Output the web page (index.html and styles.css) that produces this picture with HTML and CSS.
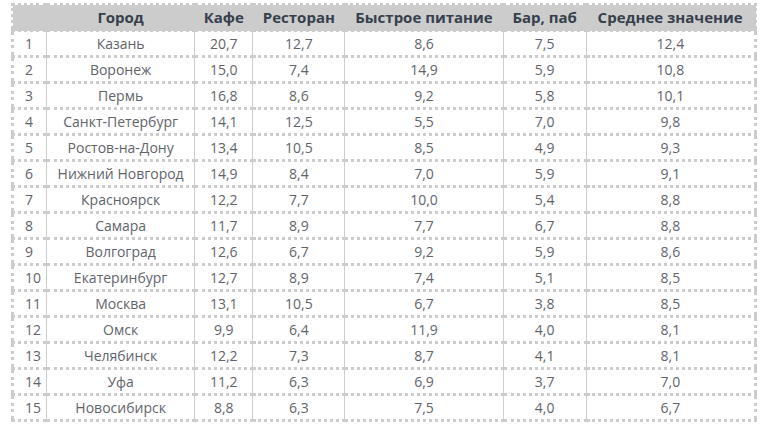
FILE: index.html
```html
<!DOCTYPE html>
<html lang="ru">
<head>
<meta charset="utf-8">
<link rel="stylesheet" href="styles.css">
</head>
<body>
<table class="rating">
  <colgroup>
    <col class="c-num"><col class="c-city"><col class="c-cafe"><col class="c-rest"><col class="c-fast"><col class="c-bar"><col class="c-avg">
  </colgroup>
  <thead>
    <tr><th></th><th>Город</th><th>Кафе</th><th>Ресторан</th><th>Быстрое питание</th><th>Бар, паб</th><th>Среднее значение</th></tr>
  </thead>
  <tbody>
    <tr><td class="num">1</td><td>Казань</td><td>20,7</td><td>12,7</td><td>8,6</td><td>7,5</td><td>12,4</td></tr>
    <tr><td class="num">2</td><td>Воронеж</td><td>15,0</td><td>7,4</td><td>14,9</td><td>5,9</td><td>10,8</td></tr>
    <tr><td class="num">3</td><td>Пермь</td><td>16,8</td><td>8,6</td><td>9,2</td><td>5,8</td><td>10,1</td></tr>
    <tr><td class="num">4</td><td>Санкт-Петербург</td><td>14,1</td><td>12,5</td><td>5,5</td><td>7,0</td><td>9,8</td></tr>
    <tr><td class="num">5</td><td>Ростов-на-Дону</td><td>13,4</td><td>10,5</td><td>8,5</td><td>4,9</td><td>9,3</td></tr>
    <tr><td class="num">6</td><td>Нижний Новгород</td><td>14,9</td><td>8,4</td><td>7,0</td><td>5,9</td><td>9,1</td></tr>
    <tr><td class="num">7</td><td>Красноярск</td><td>12,2</td><td>7,7</td><td>10,0</td><td>5,4</td><td>8,8</td></tr>
    <tr><td class="num">8</td><td>Самара</td><td>11,7</td><td>8,9</td><td>7,7</td><td>6,7</td><td>8,8</td></tr>
    <tr><td class="num">9</td><td>Волгоград</td><td>12,6</td><td>6,7</td><td>9,2</td><td>5,9</td><td>8,6</td></tr>
    <tr><td class="num">10</td><td>Екатеринбург</td><td>12,7</td><td>8,9</td><td>7,4</td><td>5,1</td><td>8,5</td></tr>
    <tr><td class="num">11</td><td>Москва</td><td>13,1</td><td>10,5</td><td>6,7</td><td>3,8</td><td>8,5</td></tr>
    <tr><td class="num">12</td><td>Омск</td><td>9,9</td><td>6,4</td><td>11,9</td><td>4,0</td><td>8,1</td></tr>
    <tr><td class="num">13</td><td>Челябинск</td><td>12,2</td><td>7,3</td><td>8,7</td><td>4,1</td><td>8,1</td></tr>
    <tr><td class="num">14</td><td>Уфа</td><td>11,2</td><td>6,3</td><td>6,9</td><td>3,7</td><td>7,0</td></tr>
    <tr><td class="num">15</td><td>Новосибирск</td><td>8,8</td><td>6,3</td><td>7,5</td><td>4,0</td><td>6,7</td></tr>
  </tbody>
</table>
</body>
</html>
```
FILE: styles.css
```css
html, body {
  margin: 0;
  padding: 0;
  background: #fff;
}
body {
  padding: 3px 0 0 11px;
  font-family: "Open Sans", "Liberation Sans", sans-serif;
}
.rating {
  border-collapse: collapse;
  table-layout: fixed;
  width: 746px;
  border: 3px dotted #cccccc;
}
.c-num { width: 34px; }
.c-city { width: 148px; }
.c-cafe { width: 58px; }
.c-rest { width: 92px; }
.c-fast { width: 158px; }
.c-bar { width: 83px; }
.c-avg { width: 169px; }
.rating th {
  background: #cccccc;
  color: #36404c;
  font-weight: 700;
  height: 23px;
  padding: 0;
  text-align: center;
  font-size: 15px;
  line-height: 21px;
  border: none;
  border-bottom: 3px dotted #cccccc;
}
.rating td {
  height: 23px;
  padding: 0;
  text-align: center;
  color: #5f646b;
  font-size: 14px;
  border-left: 1px solid #cccccc;
  border-right: 1px solid #cccccc;
  border-bottom: 3px dotted #cccccc;
  line-height: 22px;
}
.rating td.num {
  text-align: left;
  padding-left: 11px;
}
```
